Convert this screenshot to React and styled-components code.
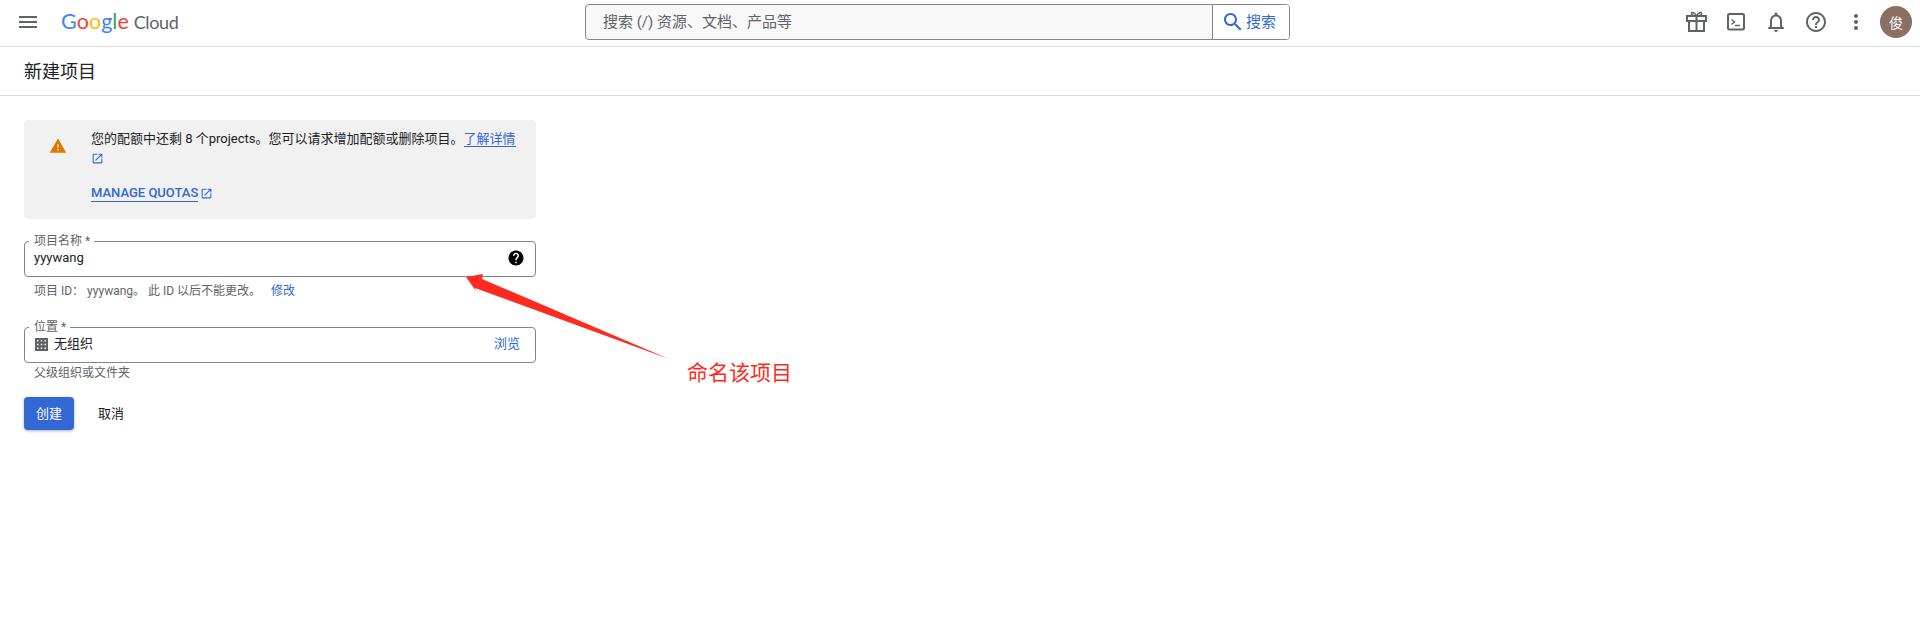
import React from "react";
import styled, { createGlobalStyle } from "styled-components";

const Global = createGlobalStyle`
  html, body { margin: 0; padding: 0; background: #fff; }
  body { font-family: Roboto, "Noto Sans CJK SC", sans-serif; font-size: 13px; color: #202124; }
  * { box-sizing: border-box; }
`;

const Page = styled.div`
  position: relative;
  width: 1920px;
  height: 619px;
  overflow: hidden;
  background: #fff;
`;

const TopBar = styled.header`
  display: flex;
  align-items: flex-start;
  height: 47px;
  border-bottom: 1px solid #dadce0;
`;

const BarLeft = styled.div`
  display: flex;
  align-items: center;
  width: 585px;
  height: 44px;
  padding-left: 16px;
`;

const Logo = styled.div`
  display: flex;
  align-items: baseline;
  margin: 0 0 2px 21px;
  font-family: Lato, sans-serif;
  font-size: 21.5px;
  line-height: 24px;
  color: #5f6368;
`;

const LogoLetter = styled.span`
  color: ${(p) => p.$color};
`;

const LogoWord = styled.span`
  margin-left: 5px;
  font-size: 18px;
  letter-spacing: -0.4px;
`;

const SearchBox = styled.div`
  display: flex;
  width: 705px;
  height: 36px;
  margin-top: 4px;
  border: 1px solid #80868b;
  border-radius: 4px;
  background: #f8f8f8;
  overflow: hidden;
`;

const SearchHint = styled.div`
  flex: 1;
  padding-left: 17px;
  line-height: 34px;
  font-size: 15px;
  color: #5f6368;
`;

const SearchButton = styled.div`
  display: flex;
  align-items: center;
  gap: 1px;
  width: 77px;
  padding-left: 8px;
  border-left: 1px solid #80868b;
  background: #fff;
  font-size: 15px;
  line-height: 32px;
  color: #3367d6;
`;

const BarRight = styled.div`
  display: flex;
  flex: 1;
  align-items: center;
  justify-content: flex-end;
  gap: 16px;
  height: 44px;
  padding-right: 8px;
  color: #5f6368;
`;

const Avatar = styled.div`
  display: flex;
  align-items: center;
  justify-content: center;
  width: 32px;
  height: 32px;
  margin-left: -4px;
  border-radius: 50%;
  background: #8d6e63;
  color: #fff;
  font-size: 14px;
`;

const SubHeader = styled.div`
  display: flex;
  align-items: center;
  height: 49px;
  padding: 0 0 3px 24px;
  border-bottom: 1px solid #dadce0;
  font-size: 18px;
  color: #202124;
`;

const Form = styled.main`
  display: flex;
  flex-direction: column;
  width: 536px;
  padding: 24px 0 0 24px;
`;

const Notice = styled.div`
  display: flex;
  height: 99px;
  padding: 8px 16px 0 25px;
  border-radius: 4px;
  background: #f1f1f1;
`;

const NoticeIcon = styled.div`
  flex: none;
  width: 42px;
  padding-top: 9px;
`;

const NoticeBody = styled.div`
  line-height: 21px;
`;

const IconLine = styled.div`
  margin-top: 1px;
`;

const TextLink = styled.a`
  color: #3367d6;
  border-bottom: 1px solid #3367d6;
`;

const PlainLink = styled.a`
  color: #3367d6;
`;

const QuotaRow = styled.div`
  display: flex;
  align-items: center;
  gap: 2px;
  margin-top: 14px;
  font-size: 13px;
  font-weight: 500;
  line-height: 16px;
  color: #3367d6;
`;

const Field = styled.fieldset`
  display: flex;
  align-items: flex-start;
  height: 41px;
  margin: ${(p) => p.$top}px 0 0;
  padding: 3px 10px 0 9px;
  border: 1px solid #80868b;
  border-radius: 4px;
  min-width: 0;
`;

const FieldLabel = styled.legend`
  padding: 0 4px 0 5px;
  margin-left: -5px;
  font-size: 12px;
  line-height: 10px;
  color: #5f6368;
`;

const FieldValue = styled.div`
  flex: 1;
  display: flex;
  align-items: center;
  gap: 6px;
  line-height: 18px;
  color: #202124;
`;

const BrowseLink = styled(PlainLink)`
  margin-right: 5px;
  line-height: 18px;
`;

const DomainGlyph = styled.svg`
  flex: none;
  margin-left: 1px;
`;

const Helper = styled.div`
  padding-left: 10px;
  margin-top: ${(p) => p.$top}px;
  font-size: 12px;
  line-height: 16px;
  color: #5f6368;
`;

const HelperGap = styled.span`
  margin-left: ${(p) => p.$gap}px;
`;

const Actions = styled.div`
  display: flex;
  align-items: center;
  gap: 7px;
  margin-top: 16px;
`;

const PrimaryButton = styled.button`
  width: 50px;
  height: 33px;
  padding: 0 0 3px;
  border: none;
  border-radius: 4px;
  background: #3367d6;
  color: #fff;
  font: inherit;
  box-shadow: 0 1px 3px rgba(60, 64, 67, 0.4);
`;

const GhostButton = styled.button`
  width: 60px;
  height: 33px;
  padding: 0 0 3px;
  border: none;
  background: transparent;
  color: #202124;
  font: inherit;
`;

const Overlay = styled.svg`
  position: absolute;
  left: 460px;
  top: 270px;
`;

const Note = styled.div`
  position: absolute;
  left: 687px;
  top: 359px;
  font-size: 21px;
  line-height: 28px;
  color: #ff2a1f;
`;

const Icon = ({ d, size = 24, color = "currentColor" }) => (
  <svg width={size} height={size} viewBox="0 0 24 24" fill={color} style={{ flex: "none" }}>
    <path d={d} />
  </svg>
);

const GiftIcon = () => (
  <svg width="24" height="24" viewBox="0 0 24 24" fill="none" stroke="currentColor" strokeWidth="2" style={{ flex: "none" }}>
    <path d="M3 6h19v5H3zM5 11v10h15V11M12.5 6v15" />
    <path d="M12.5 6C11 2.5 7.5 1.5 7.5 3.5 7.5 5.5 10 6 12.5 6zM12.5 6C14 2.5 17.5 1.5 17.5 3.5 17.5 5.5 15 6 12.5 6z" strokeWidth="1.5" />
  </svg>
);

const TerminalIcon = () => (
  <svg width="24" height="24" viewBox="0 0 24 24" fill="none" stroke="currentColor" strokeWidth="2" style={{ flex: "none" }}>
    <rect x="4" y="4" width="16" height="15.5" rx="1.5" />
    <path d="M7.5 9.5l3 2.5-3 2.5" strokeWidth="1.5" />
    <path d="M11 15.5h5" strokeWidth="1.5" />
  </svg>
);

const DomainIcon = () => (
  <DomainGlyph width="13" height="13" viewBox="0 0 13 13" fill="#5f6368" fillRule="evenodd">
    <path d="M0 0h13v13H0zM2 2h1.500v1.500H2zM5.750 2h1.500v1.500h-1.500zM9.500 2H11v1.500H9.500zM2 5.750h1.500v1.500H2zM5.750 5.750h1.500v1.500h-1.500zM9.500 5.750H11v1.500H9.500zM2 9.500h1.500V11H2zM5.750 9.500h1.500V11h-1.500zM9.500 9.500H11V11H9.500z" />
  </DomainGlyph>
);

const paths = {
  menu: "M3 18h18v-2H3v2zm0-5h18v-2H3v2zm0-7v2h18V6H3z",
  search: "M15.5 14h-.79l-.28-.27C15.41 12.59 16 11.11 16 9.5 16 5.91 13.09 3 9.5 3S3 5.91 3 9.5 5.91 16 9.5 16c1.61 0 3.09-.59 4.23-1.57l.27.28v.79l5 4.99L20.49 19l-4.99-5zm-6 0C7.01 14 5 11.99 5 9.5S7.01 5 9.5 5 14 7.01 14 9.5 11.99 14 9.5 14z",
  bell: "M12 22c1.1 0 2-.9 2-2h-4c0 1.1.9 2 2 2zm6-6v-5c0-3.07-1.63-5.64-4.5-6.32V4c0-.83-.67-1.5-1.5-1.5s-1.5.67-1.5 1.5v.68C7.64 5.36 6 7.92 6 11v5l-2 2v1h16v-1l-2-2zm-2 1H8v-6c0-2.48 1.51-4.5 4-4.5s4 2.02 4 4.5v6z",
  help: "M11 18h2v-2h-2v2zm1-16C6.48 2 2 6.48 2 12s4.48 10 10 10 10-4.48 10-10S17.52 2 12 2zm0 18c-4.41 0-8-3.59-8-8s3.59-8 8-8 8 3.59 8 8-3.59 8-8 8zm0-14c-2.21 0-4 1.79-4 4h2c0-1.1.9-2 2-2s2 .9 2 2c0 2-3 1.75-3 5h2c0-2.25 3-2.5 3-5 0-2.21-1.79-4-4-4z",
  more: "M12 8c1.1 0 2-.9 2-2s-.9-2-2-2-2 .9-2 2 .9 2 2 2zm0 2c-1.1 0-2 .9-2 2s.9 2 2 2 2-.9 2-2-.9-2-2-2zm0 6c-1.1 0-2 .9-2 2s.9 2 2 2 2-.9 2-2-.9-2-2-2z",
  warning: "M1 21h22L12 2 1 21zm12-3h-2v-2h2v2zm0-4h-2v-4h2v4z",
  external: "M19 19H5V5h7V3H5a2 2 0 0 0-2 2v14c0 1.1.9 2 2 2h14c1.1 0 2-.9 2-2v-7h-2v7zM14 3v2h3.59l-9.83 9.83 1.41 1.41L19 6.41V10h2V3h-7z",
  helpFilled: "M12 2C6.48 2 2 6.48 2 12s4.48 10 10 10 10-4.48 10-10S17.52 2 12 2zm1 17h-2v-2h2v2zm2.07-7.75l-.9.92C13.45 12.9 13 13.5 13 15h-2v-.5c0-1.1.45-2.1 1.17-2.83l1.24-1.26c.37-.36.59-.86.59-1.41 0-1.1-.9-2-2-2s-2 .9-2 2H8c0-2.21 1.79-4 4-4s4 1.79 4 4c0 .88-.36 1.68-.93 2.25z",
};

const logoLetters = [
  ["G", "#4285f4"],
  ["o", "#ea4335"],
  ["o", "#fbbc05"],
  ["g", "#4285f4"],
  ["l", "#34a853"],
  ["e", "#ea4335"],
];

export default function App() {
  return (
    <Page>
      <Global />
      <TopBar>
        <BarLeft>
          <Icon d={paths.menu} color="#5f6368" />
          <Logo>
            {logoLetters.map(([ch, color], i) => (
              <LogoLetter key={i} $color={color}>{ch}</LogoLetter>
            ))}
            <LogoWord>Cloud</LogoWord>
          </Logo>
        </BarLeft>
        <SearchBox>
          <SearchHint>搜索 (/) 资源、文档、产品等</SearchHint>
          <SearchButton>
            <Icon d={paths.search} color="#3367d6" />
            搜索
          </SearchButton>
        </SearchBox>
        <BarRight>
          <GiftIcon />
          <TerminalIcon />
          <Icon d={paths.bell} />
          <Icon d={paths.help} />
          <Icon d={paths.more} />
          <Avatar>俊</Avatar>
        </BarRight>
      </TopBar>
      <SubHeader>新建项目</SubHeader>
      <Form>
        <Notice>
          <NoticeIcon>
            <Icon d={paths.warning} size={18} color="#e37400" />
          </NoticeIcon>
          <NoticeBody>
            您的配额中还剩 8 个projects。您可以请求增加配额或删除项目。
            <TextLink>了解详情</TextLink>
            <IconLine><Icon d={paths.external} size={13} color="#3367d6" /></IconLine>
            <QuotaRow>
              <TextLink>MANAGE QUOTAS</TextLink>
              <Icon d={paths.external} size={13} color="#3367d6" />
            </QuotaRow>
          </NoticeBody>
        </Notice>
        <Field $top={17}>
          <FieldLabel>项目名称 *</FieldLabel>
          <FieldValue>yyywang</FieldValue>
          <Icon d={paths.helpFilled} size={18} color="#000" />
        </Field>
        <Helper $top={6}>
          项目 ID： yyywang。 此 ID 以后不能更改。<HelperGap $gap={10}><PlainLink>修改</PlainLink></HelperGap>
        </Helper>
        <Field $top={23}>
          <FieldLabel>位置 *</FieldLabel>
          <FieldValue>
            <DomainIcon />
            无组织
          </FieldValue>
          <BrowseLink>浏览</BrowseLink>
        </Field>
        <Helper $top={2}>父级组织或文件夹</Helper>
        <Actions>
          <PrimaryButton>创建</PrimaryButton>
          <GhostButton>取消</GhostButton>
        </Actions>
      </Form>
      <Overlay width="220" height="100" viewBox="0 0 220 100">
        <polygon points="6,7 23,4 22,9 209,89 15,18 16,21" fill="#ff2a1f" />
      </Overlay>
      <Note>命名该项目</Note>
    </Page>
  );
}
